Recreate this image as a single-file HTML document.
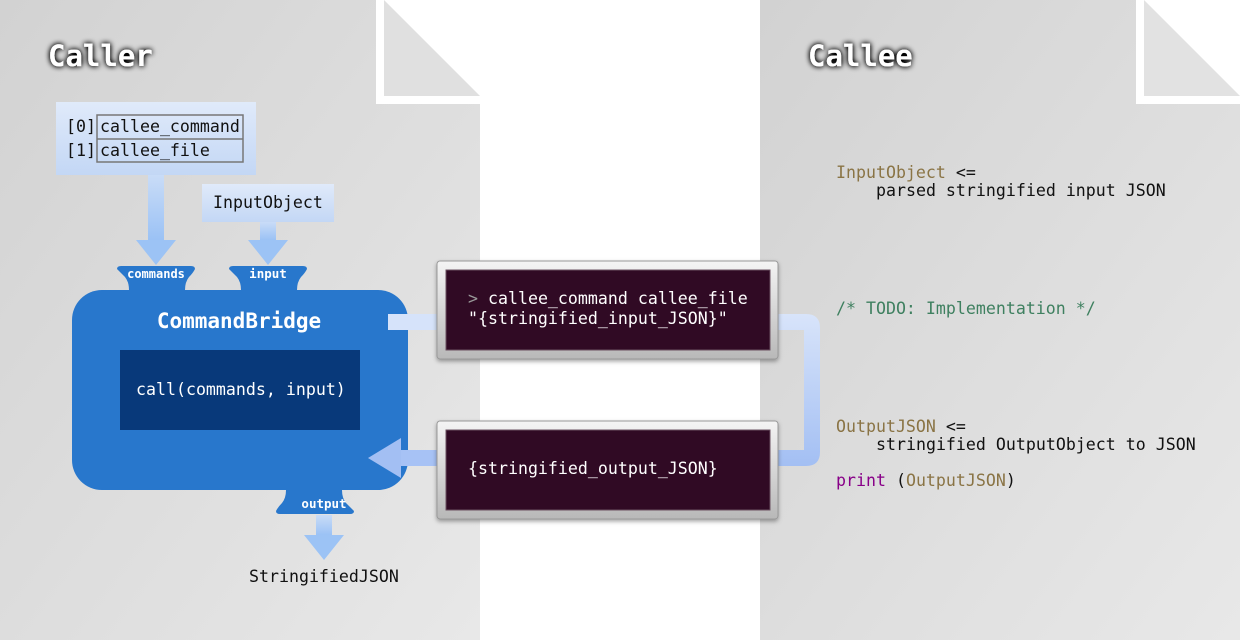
<!DOCTYPE html>
<html><head><meta charset="utf-8"><style>
html,body{margin:0;padding:0;width:1240px;height:640px;overflow:hidden;background:#fff}
svg{display:block}
text{font-family:"DejaVu Sans Mono","Liberation Mono",monospace}
</style></head><body>
<svg width="1240" height="640" viewBox="0 0 1240 640" xmlns="http://www.w3.org/2000/svg">
<defs>
<linearGradient id="pg" x1="0" y1="0" x2="1" y2="1">
<stop offset="0" stop-color="#d2d2d2"/><stop offset="1" stop-color="#e8e8e8"/></linearGradient>
<linearGradient id="bx" x1="0" y1="0" x2="0" y2="1">
<stop offset="0" stop-color="#e0eafa"/><stop offset="1" stop-color="#c3d7f5"/></linearGradient>
<linearGradient id="ar" x1="0" y1="0" x2="0" y2="1">
<stop offset="0" stop-color="#c9dcf7"/><stop offset="1" stop-color="#9bc2f5"/></linearGradient>
<linearGradient id="lp" x1="0" y1="0" x2="0" y2="1">
<stop offset="0" stop-color="#d8e4fa"/><stop offset="1" stop-color="#a3bff3"/></linearGradient>
<linearGradient id="fr" x1="0" y1="0" x2="0" y2="1">
<stop offset="0" stop-color="#f4f4f4"/><stop offset="1" stop-color="#b8b8b8"/></linearGradient>
<filter id="glow" x="-20%" y="-40%" width="140%" height="180%">
<feGaussianBlur in="SourceAlpha" stdDeviation="3"/><feComponentTransfer><feFuncA type="linear" slope="1.6"/></feComponentTransfer>
<feMerge><feMergeNode/><feMergeNode in="SourceGraphic"/></feMerge></filter>
<filter id="sh" x="-5%" y="-10%" width="110%" height="130%">
<feDropShadow dx="0" dy="2" stdDeviation="2" flood-color="#000" flood-opacity="0.35"/></filter>
</defs>
<rect x="0" y="0" width="480" height="640" fill="url(#pg)"/>
<rect x="376" y="0" width="104" height="104" fill="#fff"/>
<polygon points="384,0 480,96 384,96" fill="#e0e0e0"/>
<rect x="760" y="0" width="480" height="640" fill="url(#pg)"/>
<rect x="1136" y="0" width="104" height="104" fill="#fff"/>
<polygon points="1144,0 1240,96 1144,96" fill="#e2e2e2"/>
<text x="48" y="66" font-size="29" font-weight="bold" fill="#fff" filter="url(#glow)">Caller</text>
<text x="808" y="66" font-size="29" font-weight="bold" fill="#fff" filter="url(#glow)">Callee</text>

<rect x="56" y="102" width="200" height="73" fill="url(#bx)"/>
<rect x="97" y="115" width="146" height="47" fill="none" stroke="#777" stroke-width="1.5"/>
<line x1="97" y1="139" x2="243" y2="139" stroke="#777" stroke-width="1.5"/>
<g font-size="16.6" fill="#111">
<text x="66" y="132">[0]</text><text x="100" y="132">callee_command</text>
<text x="66" y="156">[1]</text><text x="100" y="156">callee_file</text>
</g>
<rect x="148" y="175" width="16" height="65" fill="url(#ar)"/>
<polygon points="136,240 176,240 156,265" fill="#9cc3f5"/>
<rect x="202" y="184" width="132" height="38" fill="url(#bx)"/>
<text x="213" y="208" font-size="16.6" fill="#111">InputObject</text>
<rect x="260" y="222" width="16" height="18" fill="url(#ar)"/>
<polygon points="248,240 288,240 268,265" fill="#9cc3f5"/>

<rect x="72" y="290" width="336" height="200" rx="30" fill="#2877cc"/>
<path d="M117,269 q0,-3 4,-3 h70 q4,0 4,3 q-2,4 -6,8 q-4,5 -4,13 v2 h-56 v-2 q0,-8 -4,-13 q-4,-4 -8,-8 z" fill="#2877cc"/>
<path d="M229,269 q0,-3 4,-3 h70 q4,0 4,3 q-2,4 -6,8 q-4,5 -4,13 v2 h-56 v-2 q0,-8 -4,-13 q-4,-4 -8,-8 z" fill="#2877cc"/>
<path d="M286,488 h56 v2 q0,8 4,13 q4,4 8,8 q0,3 -4,3 h-70 q-4,0 -4,-3 q2,-4 6,-8 q4,-5 4,-13 z" fill="#2877cc"/>
<text x="156" y="278" font-size="12" fill="#fff" text-anchor="middle" font-weight="bold" font-family="Liberation Sans, sans-serif">commands</text>
<text x="268" y="278" font-size="12.5" fill="#fff" text-anchor="middle" font-weight="bold">input</text>
<text x="324" y="508" font-size="12.5" fill="#fff" text-anchor="middle" font-weight="bold">output</text>
<text x="239" y="328" font-size="21" font-weight="bold" fill="#fff" text-anchor="middle" font-family="DejaVu Sans, sans-serif">CommandBridge</text>
<rect x="120" y="350" width="240" height="80" fill="#08397a"/>
<text x="136" y="395" font-size="16.6" fill="#fff">call(commands, input)</text>
<rect x="316" y="515" width="16" height="20" fill="url(#ar)"/>
<polygon points="304,535 344,535 324,560" fill="#9cc3f5"/>
<text x="249" y="582" font-size="16.6" fill="#111">StringifiedJSON</text>

<rect x="388" y="314" width="52" height="16" fill="#d6e3fa"/>
<path d="M776,314 h30 q14,0 14,14 v124 q0,14 -14,14 h-30 v-16 h28 v-120 h-28 z" fill="url(#lp)"/>
<rect x="400" y="450" width="40" height="16" fill="#a7c2f5"/>
<polygon points="368,458 401,438 401,478" fill="#a3bff3"/>

<rect x="437" y="261" width="341" height="98" rx="3" fill="url(#fr)" stroke="#999" filter="url(#sh)"/>
<rect x="446" y="270" width="324" height="80" fill="#300a24" stroke="#6a5060"/>
<text x="468" y="304" font-size="16.6" fill="#fff"><tspan fill="#999">&gt;</tspan> callee_command callee_file</text>
<text x="468" y="324" font-size="16.6" fill="#fff">"{stringified_input_JSON}"</text>
<rect x="437" y="421" width="341" height="98" rx="3" fill="url(#fr)" stroke="#999" filter="url(#sh)"/>
<rect x="446" y="430" width="324" height="80" fill="#300a24" stroke="#6a5060"/>
<text x="468" y="474" font-size="16.6" fill="#fff">{stringified_output_JSON}</text>

<g font-size="16.6">
<text x="836" y="178" fill="#8a7445">InputObject <tspan fill="#111">&lt;=</tspan></text>
<text x="876" y="196" fill="#111">parsed stringified input JSON</text>
<text x="836" y="314" fill="#3f8060">/* TODO: Implementation */</text>
<text x="836" y="432" fill="#8a7445">OutputJSON <tspan fill="#111">&lt;=</tspan></text>
<text x="876" y="450" fill="#111">stringified OutputObject to JSON</text>
<text x="836" y="486" fill="#880088">print <tspan fill="#111">(</tspan><tspan fill="#8a7445">OutputJSON</tspan><tspan fill="#111">)</tspan></text>
</g>
</svg>
</body></html>
